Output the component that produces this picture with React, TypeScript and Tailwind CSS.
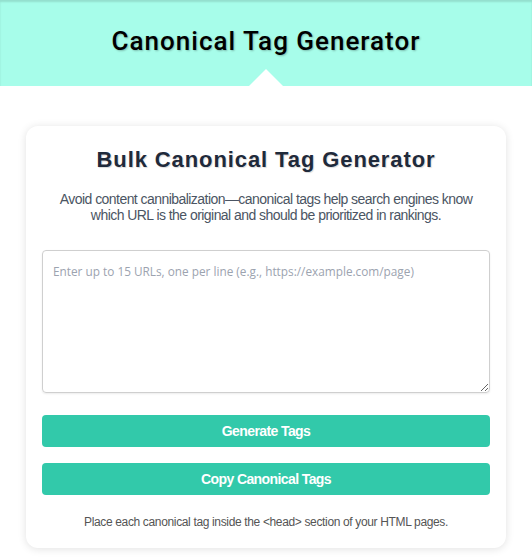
import { useState } from 'react';

export default function App() {
  const [urls, setUrls] = useState('');

  return (
    <div className="min-h-[560px] bg-white" style={{ fontFamily: 'Arial, "Liberation Sans", sans-serif' }}>
      {/* Header */}
      <header className="relative h-[86px] bg-[#a7fdea] flex items-center justify-center shadow-[inset_0_2px_2px_rgba(0,0,0,0.12)]">
        <h1
          className="text-[26px] font-medium text-black -mt-1 tracking-[1px] [text-shadow:1px_1px_2px_rgba(0,0,0,0.25)]"
          style={{ fontFamily: 'Roboto, sans-serif' }}
        >
          Canonical Tag Generator
        </h1>
        <div className="absolute bottom-0 left-1/2 -translate-x-1/2 w-0 h-0 border-l-[17px] border-r-[17px] border-b-[17px] border-l-transparent border-r-transparent border-b-white" />
      </header>

      {/* Card */}
      <main className="px-[26px] pt-10 pb-3">
        <div className="bg-white rounded-xl shadow-[0_1px_8px_rgba(0,0,0,0.12)] px-4 pt-5 pb-[18px]">
          <h2 className="text-center text-[22px] font-bold text-[#1f2a3b] leading-7 tracking-[0.9px] [text-shadow:1px_1px_1px_rgba(0,0,0,0.15)]">
            Bulk Canonical Tag Generator
          </h2>
          <p className="text-center text-sm text-[#4b5563] mt-[17px] leading-4 tracking-[-0.55px]">
            Avoid content cannibalization—canonical tags help search engines know which URL is the original and should be prioritized in rankings.
          </p>

          <textarea
            value={urls}
            onChange={(e) => setUrls(e.target.value)}
            placeholder="Enter up to 15 URLs, one per line (e.g., https://example.com/page)"
            className="mt-[27px] block w-full h-[143px] rounded border border-[#cfcfcf] px-2.5 pt-3 pb-2.5 text-[11.8px] text-gray-800 placeholder:text-[#9ca3af] outline-none shadow-[0_1px_2px_rgba(0,0,0,0.08)]"
            style={{ fontFamily: '"Open Sans", sans-serif' }}
          />

          <div className="mt-[22px] space-y-4">
            <button className="w-full h-8 rounded bg-[#32c9aa] text-white font-bold text-sm tracking-[-0.6px]">
              Generate Tags
            </button>
            <button className="w-full h-8 rounded bg-[#32c9aa] text-white font-bold text-sm tracking-[-0.6px]">
              Copy Canonical Tags
            </button>
          </div>

          <p className="text-center text-xs text-[#555] mt-[19px] tracking-[-0.35px]">
            Place each canonical tag inside the &lt;head&gt; section of your HTML pages.
          </p>
        </div>
      </main>
    </div>
  );
}
